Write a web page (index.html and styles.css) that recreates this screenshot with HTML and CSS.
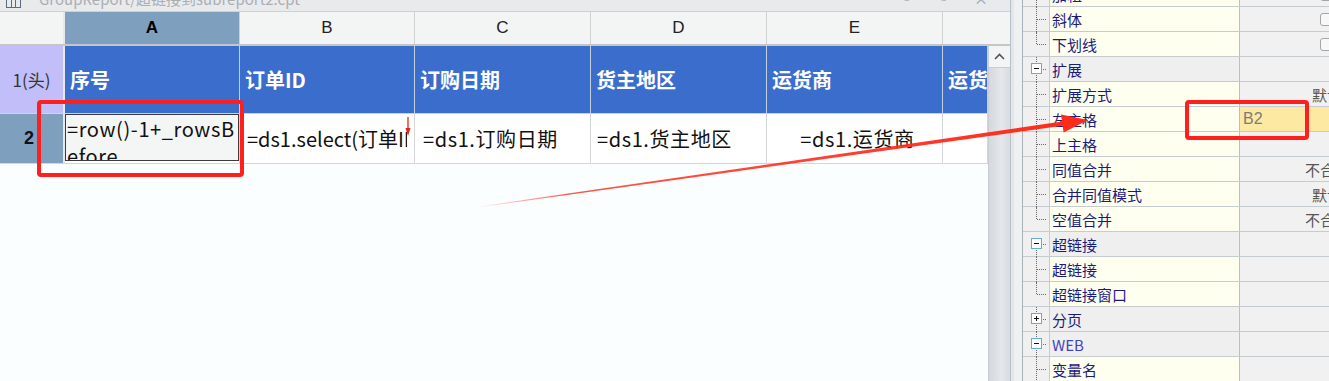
FILE: index.html
```html
<!DOCTYPE html>
<html lang="zh-CN">
<head>
    <meta charset="UTF-8">
    <title>报表设计 - 扩展属性</title>
    <link rel="stylesheet" href="styles.css">
</head>
<body>
<div class="app">
    <div class="sheet">
        <div class="titlebar">
            <span class="doc-icon"></span>
            <span class="doc-name">GroupReport/超链接到subreport2.cpt</span>
            <span class="win-btns">▫ ▫ ×</span>
        </div>
        <div class="colheads">
            <div class="ch rh"></div>
            <div class="ch col-a sel">A</div>
            <div class="ch col-b">B</div>
            <div class="ch col-c">C</div>
            <div class="ch col-d">D</div>
            <div class="ch col-e">E</div>
            <div class="ch col-f"></div>
        </div>
        <div class="grid-body">
            <div class="grid">
                <div class="row row-head">
                    <div class="rh rh-head">1(头)</div>
                    <div class="cell col-a">序号</div>
                    <div class="cell col-b">订单ID</div>
                    <div class="cell col-c">订购日期</div>
                    <div class="cell col-d">货主地区</div>
                    <div class="cell col-e">运货商</div>
                    <div class="cell col-f">运货</div>
                </div>
                <div class="row row-data">
                    <div class="rh rh-data">2</div>
                    <div class="cell col-a"><div class="cur">=row()-1+_rowsBefore</div></div>
                    <div class="cell col-b">
                        <span class="clip">=ds1.select(订单ID)</span>
                        <svg class="expand-mark" width="8" height="20" viewBox="0 0 8 20">
                            <line x1="4" y1="0" x2="4" y2="16" stroke="#e8231c" stroke-width="1.3"/>
                            <path d="M1.5 11 L4 19 L6.5 11 Z" fill="#e8231c"/>
                        </svg>
                    </div>
                    <div class="cell col-c">=ds1.订购日期</div>
                    <div class="cell col-d">=ds1.货主地区</div>
                    <div class="cell col-e center">=ds1.运货商</div>
                    <div class="cell col-f"></div>
                </div>
            </div>
            <div class="vscroll">
                <div class="sb-up">
                    <svg width="11" height="7" viewBox="0 0 11 7">
                        <path d="M1 6 L5.5 1.5 L10 6" fill="none" stroke="#555" stroke-width="1.6"/>
                    </svg>
                </div>
                <div class="sb-track"></div>
            </div>
        </div>
    </div>

    <div class="splitter"></div>

    <div class="props">
        <div class="prop-list">
            <div class="prop">
                <div class="tree"></div><div class="name">加粗</div>
                <div class="val"><span class="chk"></span></div>
            </div>
            <div class="prop">
                <div class="tree"></div><div class="name">斜体</div>
                <div class="val"><span class="chk"></span></div>
            </div>
            <div class="prop last">
                <div class="tree"></div><div class="name">下划线</div>
                <div class="val"><span class="chk"></span></div>
            </div>
            <div class="prop group">
                <div class="tree"><span class="toggle"></span></div><div class="name">扩展</div>
                <div class="val"></div>
            </div>
            <div class="prop">
                <div class="tree"></div><div class="name">扩展方式</div>
                <div class="val"><span class="v v-def">默认</span></div>
            </div>
            <div class="prop">
                <div class="tree"></div><div class="name">左主格</div>
                <div class="val picked"><span class="v">B2</span></div>
            </div>
            <div class="prop">
                <div class="tree"></div><div class="name">上主格</div>
                <div class="val"></div>
            </div>
            <div class="prop">
                <div class="tree"></div><div class="name">同值合并</div>
                <div class="val"><span class="v v-no">不合并</span></div>
            </div>
            <div class="prop">
                <div class="tree"></div><div class="name">合并同值模式</div>
                <div class="val"><span class="v v-def">默认</span></div>
            </div>
            <div class="prop last">
                <div class="tree"></div><div class="name">空值合并</div>
                <div class="val"><span class="v v-no">不合并</span></div>
            </div>
            <div class="prop group">
                <div class="tree top-open"><span class="toggle"></span></div><div class="name">超链接</div>
                <div class="val"></div>
            </div>
            <div class="prop">
                <div class="tree"></div><div class="name">超链接</div>
                <div class="val"></div>
            </div>
            <div class="prop last">
                <div class="tree"></div><div class="name">超链接窗口</div>
                <div class="val"></div>
            </div>
            <div class="prop group">
                <div class="tree"><span class="toggle plus"></span></div><div class="name">分页</div>
                <div class="val"></div>
            </div>
            <div class="prop group">
                <div class="tree"><span class="toggle"></span></div><div class="name web">WEB</div>
                <div class="val"></div>
            </div>
            <div class="prop">
                <div class="tree"></div><div class="name">变量名</div>
                <div class="val"></div>
            </div>
        </div>
    </div>

    <!-- annotation marks drawn over the screenshot -->
    <div class="mark mark-cell"></div>
    <div class="mark mark-val"></div>
    <svg class="arrow" width="1329" height="381" viewBox="0 0 1329 381">
        <defs>
            <linearGradient id="fade" x1="478" y1="207" x2="1088" y2="120" gradientUnits="userSpaceOnUse">
                <stop offset="0" stop-color="#ff2a1a" stop-opacity="0"/>
                <stop offset="0.15" stop-color="#ff2a1a" stop-opacity="0.8"/>
                <stop offset="1" stop-color="#ff2a1a"/>
            </linearGradient>
        </defs>
        <polygon points="478,206.6 1062,121.5 1061,114.5 1088,120 1063.6,132.6 1062.6,125.7 478,207.4" fill="url(#fade)"/>
    </svg>
</div>
</body>
</html>
```

FILE: styles.css
```css
body {
    margin: 0;
    background: #fafeff;
    font-family: "Noto Sans CJK SC", "Noto Sans", sans-serif;
    overflow: hidden;
}
.app {
    position: relative;
    display: flex;
    width: 1329px;
    height: 381px;
    overflow: hidden;
}

/* left: sheet */
.sheet {
    width: 1010px;
    display: flex;
    flex-direction: column;
    background: #fafeff;
}
.titlebar {
    height: 11px;
    border-bottom: 1px solid #cdd1d6;
    background: #e9eaec;
    display: flex;
    align-items: flex-start;
    overflow: hidden;
}
.doc-icon {
    width: 13px;
    height: 7px;
    margin: 0 18px 0 6px;
    border: 1px solid #5a6a80;
    border-top: none;
    background: linear-gradient(to right, transparent 4px, #5a6a80 4px 5px, transparent 5px 8px, #5a6a80 8px 9px, transparent 9px);
}
.doc-name {
    margin-top: -9px;
    font-size: 15px;
    line-height: 15px;
    color: #a9aeb4;
}
.win-btns {
    margin-top: -9px;
    margin-left: auto;
    margin-right: 12px;
    font-size: 14px;
    line-height: 14px;
    color: #9aa0a6;
    letter-spacing: 10px;
}
.colheads {
    display: flex;
    height: 34px;
    border-bottom: 2px solid #c4c6c8;
    background: #f3f4f4;
    box-sizing: border-box;
}
.ch {
    display: flex;
    align-items: center;
    justify-content: center;
    box-sizing: border-box;
    border-right: 1px solid #cfd1d3;
    font-family: "Liberation Sans", Arial, sans-serif;
    font-size: 17px;
    color: #222;
}
.ch.sel {
    background: #7f9fbf;
    color: #000;
    font-weight: bold;
}
.rh { width: 65px; flex-shrink: 0; box-sizing: border-box; border-right: 2px solid #e6e8ea; }
.col-a { width: 175px; }
.col-b { width: 175px; }
.col-c { width: 176px; }
.col-d { width: 176px; }
.col-e { width: 176px; }
.col-f { flex: 1; border-right: none; }

.grid-body {
    flex: 1;
    display: flex;
}
.grid {
    width: 988px;
}
.row {
    display: flex;
}
.row-head { height: 68px; }
.row-data { height: 50px; }
.cell {
    box-sizing: border-box;
    flex-shrink: 0;
    display: flex;
    align-items: center;
    overflow: hidden;
    white-space: nowrap;
    border-right: 1px solid #d4d6d8;
    border-bottom: 1px solid #d4d6d8;
    font-size: 20px;
}
.row-head .cell {
    background: #3b6dcc;
    color: #fff;
    font-weight: bold;
    padding-left: 5px;
    border-color: #c6d0e2;
}
.row-data .cell {
    background: #fff;
    color: #111;
    padding-left: 7px;
    letter-spacing: 0.6px;
}
.row-data .col-c { padding-left: 8px; }
.row-data .col-d { padding-left: 6px; }
.row-data .cell.center { justify-content: center; padding-left: 6px; }
.rh-head, .rh-data {
    display: flex;
    align-items: center;
    justify-content: center;
    border-bottom: 1px solid #d4d6d8;
    color: #333;
}
.rh-head {
    background: #c1bef9;
    font-size: 17px;
}
.rh-data {
    background: #7f9fbf;
    color: #111;
    font-family: "Liberation Sans", Arial, sans-serif;
    font-weight: bold;
    font-size: 18px;
    justify-content: flex-end;
    padding-right: 29px;
}
.row-data .cell.col-a {
    padding: 0;
    align-items: stretch;
}
.cur {
    width: 100%;
    height: 47px;
    box-sizing: border-box;
    border: 1.5px solid #3c3c3c;
    background: #f4f6f6;
    padding-left: 1px;
    line-height: 27px;
    white-space: normal;
    word-break: break-all;
    overflow: hidden;
}
.row-data .cell.col-b {
    position: relative;
    padding-right: 7px;
    letter-spacing: 0;
}
.clip {
    overflow: hidden;
}
.expand-mark {
    position: absolute;
    right: 2px;
    top: 3px;
}

.vscroll {
    width: 22px;
    box-sizing: border-box;
    border-left: 1px solid #c8cdd3;
    background: #dde1e6;
    display: flex;
    flex-direction: column;
}
.sb-up {
    height: 21px;
    display: flex;
    align-items: center;
    justify-content: center;
    background: #f3f4f5;
    border-bottom: 1px solid #c8cdd3;
}
.sb-track {
    flex: 1;
    background: linear-gradient(to right, #d4d9df, #e4e7eb 60%, #d7dce1);
}

.splitter {
    width: 13px;
    box-sizing: border-box;
    background: linear-gradient(to right, #b9bfc6 0 1px, #e3e6ea 1px 4px, #eef0f2 4px);
    border-right: 1px solid #a9b0b8;
}

/* right: property sheet */
.props {
    flex: 1;
    overflow: hidden;
    background: #f0f0f0;
    font-size: 15px;
    color: #1b1b7e;
}
.prop-list {
    margin-top: -18px;
}
.prop {
    display: flex;
    height: 25px;
    box-sizing: border-box;
    border-bottom: 1px solid #c6cbd0;
}
.tree {
    position: relative;
    width: 27px;
    flex-shrink: 0;
    box-sizing: border-box;
    border-right: 1px solid #c6cbd0;
    background: #f0f0f0;
}
.tree::before {
    content: "";
    position: absolute;
    left: 13px;
    top: 0;
    bottom: -1px;
    border-left: 1px dotted #6a6a6a;
}
.tree::after {
    content: "";
    position: absolute;
    left: 14px;
    top: 12px;
    width: 9px;
    border-top: 1px dotted #6a6a6a;
}
.prop.last .tree::before { bottom: 12px; }
.tree.top-open::before { top: 6px; }
.toggle {
    position: absolute;
    left: 8px;
    top: 6px;
    width: 11px;
    height: 11px;
    box-sizing: border-box;
    border: 1px solid #62afcd;
    background: #fff;
    z-index: 1;
}
.toggle::before {
    content: "";
    position: absolute;
    left: 2px;
    top: 4px;
    width: 5px;
    height: 1px;
    background: #111;
}
.toggle.plus::after {
    content: "";
    position: absolute;
    left: 4px;
    top: 2px;
    width: 1px;
    height: 5px;
    background: #111;
}
.name {
    width: 190px;
    flex-shrink: 0;
    box-sizing: border-box;
    display: flex;
    align-items: center;
    padding-left: 2px;
    background: #fffff0;
    border-right: 1px solid #b9bec4;
    white-space: nowrap;
}
.prop.group .name { background: #efefef; }
.name.web { color: #4343c4; }
.val {
    flex: 1;
    display: flex;
    align-items: center;
    background: #f1f1f1;
    white-space: nowrap;
    overflow: hidden;
}
.val.picked { background: #fde9a2; }
.v { color: #555; }
.val.picked .v {
    color: #7c7c7c;
    padding-left: 3px;
    font-family: "Liberation Sans", Arial, sans-serif;
    font-size: 16px;
}
.v-def { margin-left: 72px; }
.v-no { margin-left: 65px; }
.chk {
    flex-shrink: 0;
    width: 13px;
    height: 13px;
    margin-left: 80px;
    box-sizing: border-box;
    border: 1px solid #a6a6a6;
    border-radius: 3px;
    background: #f8f8f8;
}

/* red annotations */
.mark {
    position: absolute;
    box-sizing: border-box;
    border: 4px solid #ff1f1f;
    border-radius: 4px;
}
.mark-cell {
    left: 37px;
    top: 100px;
    width: 207px;
    height: 77px;
}
.mark-val {
    left: 1185px;
    top: 100px;
    width: 124px;
    height: 40px;
}
.arrow {
    position: absolute;
    left: 0;
    top: 0;
}
```
